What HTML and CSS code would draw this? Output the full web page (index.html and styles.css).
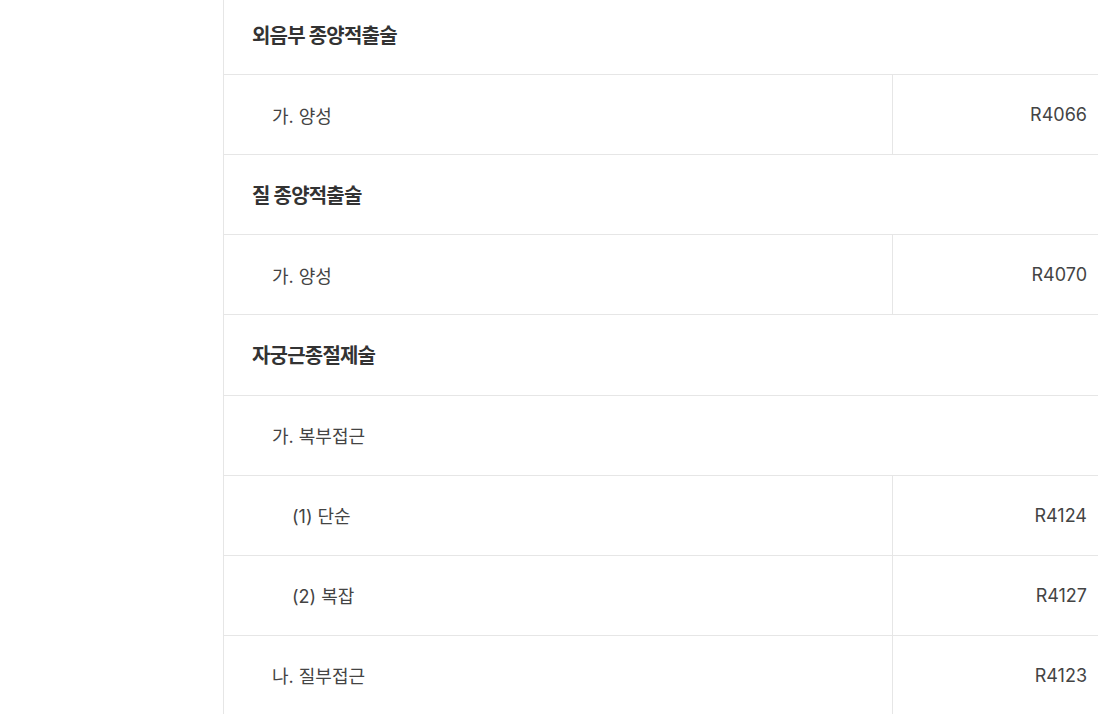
FILE: index.html
```html
<!DOCTYPE html>
<html lang="ko">
<head>
<meta charset="utf-8">
<link rel="stylesheet" href="styles.css">
</head>
<body>
<div class="page">
  <aside class="side"></aside>
  <main class="table">
    <div class="row head"><div class="name">외음부 종양적출술</div></div>
    <div class="row"><div class="name lv1">가. 양성</div><div class="code">R4066</div></div>
    <div class="row head"><div class="name">질 종양적출술</div></div>
    <div class="row"><div class="name lv1">가. 양성</div><div class="code">R4070</div></div>
    <div class="row head"><div class="name">자궁근종절제술</div></div>
    <div class="row"><div class="name lv1">가. 복부접근</div></div>
    <div class="row"><div class="name lv2">(1) 단순</div><div class="code">R4124</div></div>
    <div class="row"><div class="name lv2">(2) 복잡</div><div class="code">R4127</div></div>
    <div class="row"><div class="name lv1">나. 질부접근</div><div class="code">R4123</div></div>
  </main>
</div>
</body>
</html>
```
FILE: styles.css
```css
html, body {
  margin: 0;
  padding: 0;
  background: #fff;
}
body {
  font-family: "Inter", "Noto Sans CJK KR", sans-serif;
  color: #333;
  overflow: hidden;
  height: 714px;
}
.page {
  display: flex;
  margin-top: -5.14px;
}
.side {
  width: 223px;
  flex: none;
}
.table {
  flex: 1;
  border-left: 1px solid #e6e6e6;
  min-width: 0;
}
.row {
  display: flex;
  height: 80.14px;
  box-sizing: border-box;
  border-bottom: 1px solid #e6e6e6;
  align-items: stretch;
}
.name {
  flex: 1;
  display: flex;
  align-items: center;
  padding-left: 28px;
  font-size: 18px;
  color: #444;
}
.head .name {
  font-weight: 700;
  font-size: 20px;
  letter-spacing: -0.8px;
  color: #333;
}
.name.lv1 { padding-left: 48px; }
.name.lv2 { padding-left: 68px; }
.code {
  width: 206px;
  flex: none;
  border-left: 1px solid #e6e6e6;
  display: flex;
  align-items: center;
  justify-content: flex-end;
  padding-right: 11px;
  box-sizing: border-box;
  font-size: 18px;
  color: #444;
}
```
